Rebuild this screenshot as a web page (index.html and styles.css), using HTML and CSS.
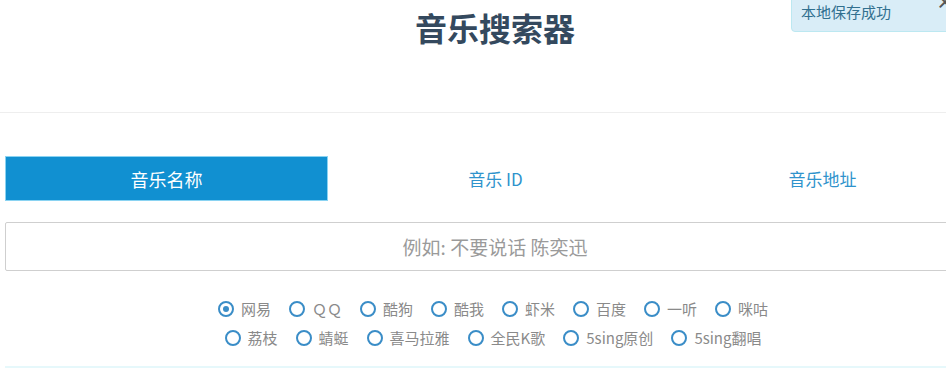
FILE: index.html
```html
<!DOCTYPE html>
<html lang="zh-CN">
<head>
<meta charset="utf-8">
<title>音乐搜索器</title>
<link rel="stylesheet" href="styles.css">
</head>
<body>
<header class="header">
  <h1 class="title">音乐搜索器</h1>
</header>
<main class="wrap">
  <nav class="tabs">
    <div class="tab active">音乐名称</div>
    <div class="tab">音乐 ID</div>
    <div class="tab">音乐地址</div>
  </nav>
  <div class="search">
    <input class="input" type="text" placeholder="例如: 不要说话 陈奕迅">
  </div>
  <div class="radios">
    <div class="row">
      <label class="radio checked"><span class="dot"></span><span class="txt">网易</span></label>
      <label class="radio"><span class="dot"></span><span class="txt">ＱＱ</span></label>
      <label class="radio"><span class="dot"></span><span class="txt">酷狗</span></label>
      <label class="radio"><span class="dot"></span><span class="txt">酷我</span></label>
      <label class="radio"><span class="dot"></span><span class="txt">虾米</span></label>
      <label class="radio"><span class="dot"></span><span class="txt">百度</span></label>
      <label class="radio"><span class="dot"></span><span class="txt">一听</span></label>
      <label class="radio"><span class="dot"></span><span class="txt">咪咕</span></label>
    </div>
    <div class="row">
      <label class="radio"><span class="dot"></span><span class="txt">荔枝</span></label>
      <label class="radio"><span class="dot"></span><span class="txt">蜻蜓</span></label>
      <label class="radio"><span class="dot"></span><span class="txt">喜马拉雅</span></label>
      <label class="radio"><span class="dot"></span><span class="txt">全民K歌</span></label>
      <label class="radio"><span class="dot"></span><span class="txt">5sing原创</span></label>
      <label class="radio"><span class="dot"></span><span class="txt">5sing翻唱</span></label>
    </div>
  </div>
  <div class="next"></div>
</main>
<div class="alert">本地保存成功<span class="close">×</span></div>
</body>
</html>
```

FILE: styles.css
```css
html, body {
  margin: 0;
  padding: 0;
  overflow: hidden;
  background: #fff;
  font-family: "Noto Sans CJK SC", "Noto Sans", "Liberation Sans", sans-serif;
}
.header {
  width: 990px;
  height: 112px;
  border-bottom: 1px solid #eeeeee;
  box-sizing: content-box;
}
.title {
  margin: 0;
  padding-top: 6px;
  text-align: center;
  font-size: 32px;
  line-height: 42px;
  font-weight: 700;
  color: #34495e;
}
.wrap {
  width: 980px;
  margin-left: 5px;
  padding-top: 43px;
}
.tabs {
  display: flex;
  height: 45px;
}
.tab {
  width: 327px;
  flex: none;
  display: flex;
  align-items: center;
  justify-content: center;
  font-size: 17px;
  color: #2f93cc;
}
.tab.active {
  width: 323px;
  box-sizing: border-box;
  background: #1190d1;
  color: #fff;
  border: 1px solid #8ad3f2;
  margin-right: 4px;
  font-size: 18px;
}
.search {
  margin-top: 21px;
}
.input {
  display: block;
  width: 100%;
  height: 49px;
  box-sizing: border-box;
  border: 1px solid #cfcfcf;
  border-radius: 2px;
  text-align: center;
  font-family: inherit;
  font-size: 19px;
  outline: none;
}
.input::placeholder {
  color: #9a9a9a;
}
.radios {
  margin-top: 23px;
  display: flex;
  flex-direction: column;
  align-items: center;
}
.row {
  display: flex;
  justify-content: center;
  height: 29px;
  align-items: center;
  margin-left: -4px;
}
.radio {
  display: flex;
  align-items: center;
  margin-right: 18px;
}
.radio:last-child {
  margin-right: 0;
}
.dot {
  width: 16px;
  height: 16px;
  box-sizing: border-box;
  border: 2px solid #3a8dc7;
  border-radius: 50%;
  margin-right: 7px;
  position: relative;
}
.radio.checked .dot::after {
  content: "";
  position: absolute;
  left: 3px;
  top: 3px;
  width: 6px;
  height: 6px;
  border-radius: 50%;
  background: #3a8dc7;
}
.txt {
  font-size: 15px;
  color: #8a8a8a;
  line-height: 20px;
}
.next {
  margin-top: 14px;
  border-top: 2px solid #e6f8fb;
}
.alert {
  position: absolute;
  top: -4px;
  left: 791px;
  width: 170px;
  height: 36px;
  box-sizing: border-box;
  padding: 2px 0 0 9px;
  background: #d9edf7;
  border: 1px solid #bce8f1;
  border-radius: 4px;
  color: #31708f;
  font-size: 15px;
  line-height: 26px;
}
.close {
  position: absolute;
  left: 144px;
  top: -6px;
  color: #555;
  font-size: 18px;
  font-weight: 700;
  line-height: 20px;
}
```
